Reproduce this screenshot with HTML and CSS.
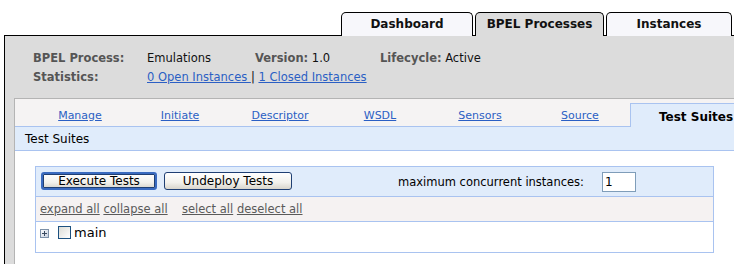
FILE: index.html
```html
<!DOCTYPE html>
<html lang="en">
<head>
    <meta charset="UTF-8">
    <title>BPEL Processes - Test Suites</title>
    <link rel="stylesheet" href="styles.css">
</head>
<body>
    <div class="top-tabs">
        <div class="top-tab">Dashboard</div>
        <div class="top-tab active">BPEL Processes</div>
        <div class="top-tab">Instances</div>
    </div>

    <div class="panel">
        <div class="info">
            <span class="label">BPEL Process:</span>
            <span>Emulations</span>
            <span><span class="label">Version:</span> 1.0</span>
            <span><span class="label">Lifecycle:</span> Active</span>

            <span class="label">Statistics:</span>
            <span class="stats"><a href="#">0 Open Instances </a> | <a href="#">1 Closed Instances</a></span>
        </div>

        <div class="inner">
            <div class="sub-tabs">
                <a class="sub-tab" href="#">Manage</a>
                <a class="sub-tab" href="#">Initiate</a>
                <a class="sub-tab" href="#">Descriptor</a>
                <a class="sub-tab" href="#">WSDL</a>
                <a class="sub-tab" href="#">Sensors</a>
                <a class="sub-tab" href="#">Source</a>
                <span class="sub-tab active">Test Suites</span>
            </div>
            <div class="subtitle">Test Suites</div>

            <div class="content">
                <div class="suites">
                    <div class="toolbar">
                        <button class="btn btn-default">Execute Tests</button>
                        <button class="btn">Undeploy Tests</button>
                        <label class="max-label" for="maxInst">maximum concurrent instances:</label>
                        <input type="text" id="maxInst" class="max-input" value="1">
                    </div>
                    <div class="tree-links">
                        <a href="#">expand all</a> <a href="#">collapse all</a>
                        <span class="spacer"></span>
                        <a href="#">select all</a> <a href="#">deselect all</a>
                    </div>
                    <div class="tree">
                        <svg class="expander" width="9" height="9" viewBox="0 0 9 9">
                            <defs>
                                <linearGradient id="exp" x1="0" y1="0" x2="1" y2="1">
                                    <stop offset="0" stop-color="#ffffff"/>
                                    <stop offset="1" stop-color="#c4cede"/>
                                </linearGradient>
                            </defs>
                            <rect x="0.5" y="0.5" width="8" height="8" fill="url(#exp)" stroke="#7c90a8"/>
                            <path d="M2 4.5h5M4.5 2v5" stroke="#3a4a60" stroke-width="1"/>
                        </svg>
                        <span class="check"></span>
                        <span class="node">main</span>
                    </div>
                </div>
            </div>
        </div>
    </div>
</body>
</html>
```

FILE: styles.css
```css
body {
    margin: 0;
    font-family: "DejaVu Sans", Verdana, sans-serif;
    font-size: 11.5px;
    color: #000;
    background: #fff;
    overflow: hidden;
}

a {
    color: #2b5fc4;
}

/* top tabs */
.top-tabs {
    display: flex;
    justify-content: flex-end;
    gap: 2px;
    padding: 12px 2px 0 0;
    height: 23px;
    position: relative;
    z-index: 1;
}
.top-tab {
    box-sizing: border-box;
    width: 132px;
    height: 24px;
    border: 1px solid #000;
    border-bottom: none;
    border-radius: 5px 5px 0 0;
    background: #f7f7fb;
    font-weight: bold;
    font-size: 12px;
    text-align: center;
    line-height: 22px;
    color: #111;
}
.top-tab.active {
    width: 129px;
    background: #dcdcdc;
}
.top-tab:last-child {
    width: 126px;
}

/* gray panel */
.panel {
    margin-left: 4px;
    border-top: 1px solid #000;
    border-left: 1px solid #000;
    background: #dcdcdc;
    padding-top: 13px;
    height: 300px;
}
.info {
    display: grid;
    grid-template-columns: 114px 108px 125px auto;
    grid-auto-rows: 19px;
    line-height: 19px;
    padding-left: 28px;
    color: #111;
}
.label {
    font-weight: bold;
    color: #555;
}
.stats {
    grid-column: 2 / 5;
}

/* inner panel */
.inner {
    margin: 11px 0 0 9px;
    border-top: 1px solid #b4b4b4;
    border-left: 1px solid #b4b4b4;
    background: #fff;
    height: 200px;
}
.sub-tabs {
    display: flex;
    align-items: flex-end;
    height: 27px;
    padding-left: 15px;
    background: #f5f3f3;
    border-bottom: 1px solid #a9c3f0;
}
.sub-tab {
    box-sizing: border-box;
    flex: none;
    width: 100px;
    height: 24px;
    padding-top: 6px;
    line-height: 16px;
    text-align: center;
    font-size: 11px;
}
.sub-tab.active {
    width: 120px;
    margin-bottom: -1px;
    padding-top: 5px;
    padding-left: 28px;
    text-align: left;
    border-top: 1px solid #a9c3f0;
    border-left: 1px solid #a9c3f0;
    background: #e0ecfb;
    font-weight: bold;
    font-size: 12px;
    color: #000;
    position: relative;
}
.subtitle {
    height: 23px;
    line-height: 25px;
    padding-left: 10px;
    background: #e0ecfb;
    border-bottom: 1px solid #a9c3f0;
    font-size: 12px;
}

.content {
    padding: 15px 0 0 20px;
}
.suites {
    width: 677px;
    border: 1px solid #a9c3f0;
}
.toolbar {
    display: flex;
    align-items: flex-start;
    height: 24px;
    padding: 5px 0 0 5px;
    background: #e0ecfb;
    border-bottom: 1px solid #a9c3f0;
}
.btn {
    box-sizing: border-box;
    height: 18px;
    padding: 0;
    border: 1px solid #1f3f73;
    border-radius: 3px;
    background: linear-gradient(#ffffff, #f2f1ec 60%, #d8d5cc);
    font-family: inherit;
    font-size: 12px;
    line-height: 15px;
    color: #000;
}
.btn-default {
    width: 116px;
    border: 2px solid #3a6bc0;
    box-shadow: inset 0 0 0 1px #1f3f73;
    line-height: 13px;
}
.btn + .btn {
    width: 128px;
    margin-left: 7px;
}
.max-label {
    box-sizing: border-box;
    width: 204px;
    margin-left: 106px;
    line-height: 20px;
    font-size: 11.5px;
}
.max-input {
    box-sizing: border-box;
    width: 34px;
    height: 20px;
    margin: 0;
    padding: 0 2px;
    border: 1px solid #7f9db9;
    font-family: inherit;
    font-size: 12px;
}

.tree-links {
    height: 24px;
    line-height: 25px;
    padding-left: 4px;
    background: #f5f2f2;
    border-bottom: 1px solid #a9c3f0;
}
.tree-links a {
    color: #5a5a5a;
}
.spacer {
    display: inline-block;
    width: 7px;
}

.tree {
    display: flex;
    align-items: flex-start;
    height: 26px;
    padding: 4px 0 0 4px;
}
.expander {
    margin: 3px 9px 0 0;
}
.check {
    box-sizing: border-box;
    width: 13px;
    height: 13px;
    border: 1px solid #1c5180;
    background: linear-gradient(135deg, #dcdcd6, #ffffff);
    margin-right: 3px;
}
.node {
    font-size: 13px;
    line-height: 14px;
}
```
